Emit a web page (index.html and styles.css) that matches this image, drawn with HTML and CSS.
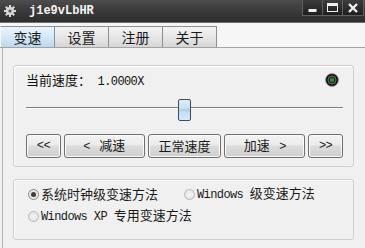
FILE: index.html
```html
<!DOCTYPE html>
<html>
<head>
<meta charset="utf-8">
<link rel="stylesheet" href="styles.css">
</head>
<body>
<div class="window">
  <div class="titlebar">
    <svg class="app-icon" width="12" height="12" viewBox="0 0 12 12">
      <g fill="#d8d8d8">
        <circle cx="6" cy="6" r="4"/>
        <rect x="5" y="0" width="2" height="12"/>
        <rect x="0" y="5" width="12" height="2"/>
        <rect x="5" y="0" width="2" height="12" transform="rotate(45 6 6)"/>
        <rect x="5" y="0" width="2" height="12" transform="rotate(-45 6 6)"/>
      </g>
      <circle cx="6" cy="6" r="1.6" fill="#555"/>
    </svg>
    <span class="title">j1e9vLbHR</span>
    <div class="controls">
      <div class="ctl"><svg width="9" height="8" viewBox="0 0 9 8"><rect x="0.5" y="5" width="8" height="3" fill="#f0f0f0"/></svg></div>
      <div class="ctl"><svg width="11" height="9" viewBox="0 0 11 9"><rect x="0.5" y="0.5" width="10" height="8" fill="none" stroke="#f0f0f0"/><rect x="0.5" y="0.5" width="10" height="2.5" fill="#f0f0f0"/></svg></div>
      <div class="ctl ctl-close"><svg width="10" height="10" viewBox="0 0 10 10"><path d="M1 1 L9 9 M9 1 L1 9" stroke="#f0f0f0" stroke-width="2.4"/></svg></div>
    </div>
  </div>
  <div class="tabstrip">
    <div class="tab active">变速</div>
    <div class="tab">设置</div>
    <div class="tab">注册</div>
    <div class="tab">关于</div>
  </div>
  <div class="content">
    <div class="group speed">
      <div class="speed-row">
        <span>当前速度：<span class="lat">&nbsp;1.0000X</span></span>
        <svg class="led" width="14" height="14" viewBox="0 0 14 14">
          <circle cx="7" cy="7" r="6.5" fill="#141414" stroke="#9a9a9a" stroke-width="0.8"/>
          <circle cx="7" cy="7" r="4" fill="#222" stroke="#6d6d6d" stroke-width="1"/>
          <circle cx="7" cy="7" r="2.3" fill="#1e8c2c"/>
        </svg>
      </div>
      <div class="slider">
        <div class="track left"></div>
        <div class="thumb"></div>
        <div class="track right"></div>
      </div>
      <div class="buttons">
        <div class="btn b-end"><span class="lat">&lt;&lt;</span></div>
        <div class="btn b-step"><span><span class="lat">&lt;&nbsp;</span>&nbsp;减速</span></div>
        <div class="btn b-norm">正常速度</div>
        <div class="btn b-step"><span>加速&nbsp;<span class="lat">&nbsp;&gt;</span></span></div>
        <div class="btn b-end"><span class="lat">&gt;&gt;</span></div>
      </div>
    </div>
    <div class="group methods">
      <label class="radio"><span class="dot checked"></span><span>系统时钟级变速方法</span></label>
      <label class="radio"><span class="dot"></span><span><span class="lat">Windows&nbsp;</span>级变速方法</span></label>
      <label class="radio"><span class="dot"></span><span><span class="lat">Windows XP&nbsp;</span>专用变速方法</span></label>
    </div>
  </div>
</div>
</body>
</html>
```
FILE: styles.css
```css
html, body {
  margin: 0;
  padding: 0;
}
body {
  width: 365px;
  height: 248px;
  overflow: hidden;
  background: #f0f0f0;
  font-family: "Noto Sans CJK SC", sans-serif;
  font-size: 13px;
  color: #111;
}
.lat {
  font-family: "Liberation Mono", monospace;
  font-size: 12px;
  letter-spacing: -0.6px;
}
.window {
  display: flex;
  flex-direction: column;
  height: 248px;
}
.titlebar {
  height: 22px;
  display: flex;
  align-items: center;
  background: linear-gradient(#4d4d4d, #3b3b3b 45%, #2e2e2e);
  border-bottom: 1px solid #707070;
}
.app-icon {
  margin-left: 4px;
}
.title {
  margin-left: 13px;
  color: #f4f4f4;
  font: bold 12px "Liberation Mono", monospace;
}
.controls {
  margin-left: auto;
  margin-right: 1px;
  align-self: flex-start;
  display: flex;
  height: 16px;
}
.ctl {
  width: 19px;
  height: 15px;
  border: 1px solid #5f5f5f;
  border-top: none;
  margin-left: -1px;
  background: linear-gradient(#3c3c3c, #1f1f1f);
  display: flex;
  align-items: center;
  justify-content: center;
}
.ctl-close {
  width: 20px;
}
.tabstrip {
  height: 24px;
  display: flex;
  align-items: flex-end;
  background: #f6f6f6;
  border-bottom: 1px solid #a3a3a3;
}
.tab {
  width: 53px;
  height: 20px;
  margin-right: -1px;
  border: 1px solid #8f8f8f;
  border-bottom: none;
  background: linear-gradient(#f4f4f4, #e6e6e6 50%, #d6d6d6);
  display: flex;
  align-items: center;
  justify-content: center;
  font-size: 14px;
  line-height: 20px;
  color: #1a1a1a;
}
.tab.active {
  background: linear-gradient(#eaf4fb, #d5e8f5 50%, #bcd9ee);
  border-left-color: #f6f6f6;
}
.content {
  flex: 1;
  margin-left: 2px;
  border-left: 1px solid #b4b4b4;
  padding: 17px 0 0 10px;
  display: flex;
  flex-direction: column;
  gap: 12px;
}
.group {
  width: 339px;
  border: 1px solid #cfcfcf;
  border-radius: 3px;
  box-shadow: inset 1px 1px 0 #fbfbfb;
}
.speed {
  height: 100px;
  padding: 0 10px 0 12px;
  box-sizing: content-box;
  width: 317px;
}
.speed-row {
  margin-top: 6px;
  height: 18px;
  display: flex;
  align-items: center;
  justify-content: space-between;
  padding-right: 4px;
  line-height: 18px;
}
.led {
  margin-top: -3px;
}
.slider {
  margin-top: 9px;
  height: 22px;
  display: flex;
  align-items: flex-start;
}
.track {
  margin-top: 8px;
  height: 1px;
  background: #7e7e7e;
  border-bottom: 1px solid #fdfdfd;
}
.track.left {
  width: 152px;
}
.track.right {
  flex: 1;
}
.thumb {
  width: 11px;
  height: 20px;
  border: 1px solid #3f4c58;
  border-radius: 2px;
  background: linear-gradient(#dcedf9, #c8e2f4 40%, #a9cde6 50%, #c3def2 60%, #d6eaf8);
}
.buttons {
  margin-top: 13px;
  display: flex;
  gap: 3px;
}
.btn {
  height: 22px;
  border: 1px solid #6f6f6f;
  border-radius: 3px;
  background: linear-gradient(#f3f3f3, #ebebeb 45%, #dcdcdc 50%, #cfcfcf);
  box-shadow: inset 0 0 0 1px #fafafa;
  display: flex;
  align-items: center;
  justify-content: center;
  line-height: 22px;
  color: #1a1a1a;
}
.b-end {
  width: 33px;
}
.b-step {
  width: 79px;
}
.b-norm {
  width: 72px;
}
.methods {
  height: 61px;
  padding: 6px 0 0 14px;
  box-sizing: border-box;
  width: 341px;
  display: grid;
  grid-template-columns: 156px 1fr;
  grid-auto-rows: 16px;
  row-gap: 6px;
  align-content: start;
}
.radio {
  display: flex;
  align-items: center;
  line-height: 16px;
  white-space: nowrap;
  color: #1a1a1a;
}
.dot {
  width: 9px;
  height: 9px;
  border: 1px solid #b9b9b9;
  border-radius: 50%;
  background: radial-gradient(circle, #f6f6f6, #dcdcdc);
  margin-right: 2px;
  display: flex;
  align-items: center;
  justify-content: center;
  flex-shrink: 0;
}
.dot.checked {
  border-color: #8a8a8a;
}
.dot.checked::after {
  content: "";
  width: 5px;
  height: 5px;
  border-radius: 50%;
  background: #3d3d3d;
}
```
